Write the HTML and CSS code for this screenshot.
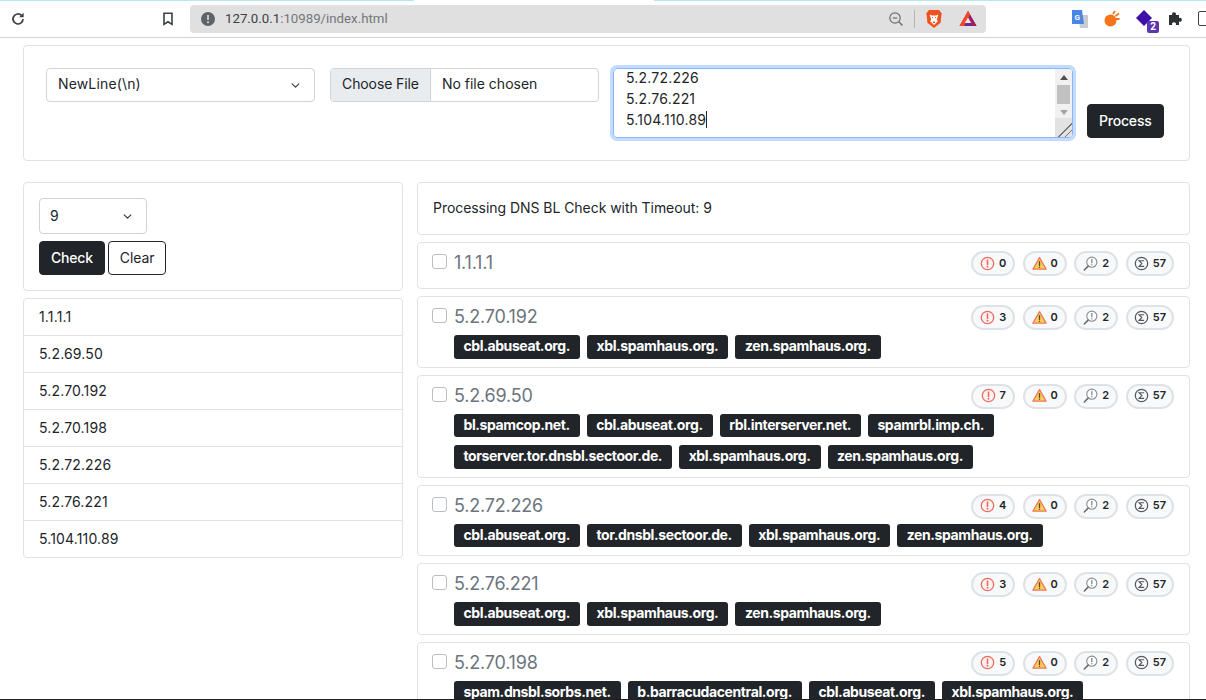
FILE: index.html
```html
<!DOCTYPE html>
<html lang="en">
<head>
  <meta charset="UTF-8">
  <title>DNS BL Check</title>
  <link rel="stylesheet" href="styles.css">
</head>
<body>
  <svg class="defs" width="0" height="0">
    <symbol id="i-error" viewBox="0 0 16 16">
      <circle cx="8" cy="8" r="6.6" fill="#fdf3f2" stroke="#ee6a60" stroke-width="1.4"/>
      <path d="M8 4.2v4.8" stroke="#ee6a60" stroke-width="1.7" stroke-linecap="round"/>
      <circle cx="8" cy="11.4" r="1" fill="#ee6a60"/>
    </symbol>
    <symbol id="i-warn" viewBox="0 0 16 16">
      <path d="M8 1.8 15 14H1z" fill="#f8cf5a" stroke="#ee7a5c" stroke-width="1.4" stroke-linejoin="round"/>
      <path d="M8 6v4" stroke="#5a4a20" stroke-width="1.4" stroke-linecap="round"/>
      <circle cx="8" cy="12" r=".8" fill="#5a4a20"/>
    </symbol>
    <symbol id="i-search" viewBox="0 0 16 16">
      <circle cx="9.4" cy="6.6" r="5.4" fill="#fff" stroke="#8a8f94" stroke-width="1.2"/>
      <path d="M5.4 10.8 1.4 15" stroke="#666b70" stroke-width="1.6" stroke-linecap="round"/>
      <path d="M9.4 3.6v3.6" stroke="#8a8f94" stroke-width="1.5" stroke-linecap="round"/>
      <circle cx="9.4" cy="9.2" r=".8" fill="#8a8f94"/>
    </symbol>
    <symbol id="i-sum" viewBox="0 0 16 16">
      <circle cx="8" cy="8" r="6.6" fill="none" stroke="#555a5f" stroke-width="1.3"/>
      <path d="M10.8 5H5.4l3 3-3 3h5.4" fill="none" stroke="#555a5f" stroke-width="1.2"/>
    </symbol>
  </svg>

  <div class="toolbar">
    <div class="loading-line"></div>
    <svg class="tool-reload" width="16" height="16" viewBox="0 0 16 16"><path d="M13 8a5 5 0 1 1-1.5-3.6" fill="none" stroke="#3c4043" stroke-width="1.7"/><path d="M13.6 1.8v4.4H9.2z" fill="#3c4043"/></svg>
    <svg class="tool-bookmark" width="12" height="14" viewBox="0 0 12 14"><path d="M2 1.2h8v11.2L6 9.8l-4 2.6z" fill="none" stroke="#3c4043" stroke-width="1.6"/></svg>
    <div class="address">
      <svg class="address-info" width="14" height="14" viewBox="0 0 14 14"><circle cx="7" cy="7" r="7" fill="#5f6368"/><path d="M7 3v5" stroke="#e0e0e0" stroke-width="1.6"/><circle cx="7" cy="10.3" r="1" fill="#e0e0e0"/></svg>
      <span class="address-host">127.0.0.1</span><span class="address-path">:10989/index.html</span>
      <div class="address-tools">
        <svg width="16" height="16" viewBox="0 0 16 16"><circle cx="7" cy="7" r="5.2" fill="none" stroke="#6a6e72" stroke-width="1.2"/><path d="M10.8 10.8 14.5 14.5" stroke="#6a6e72" stroke-width="1.4"/><path d="M4.8 7h4.4" stroke="#6a6e72" stroke-width="1.2"/></svg>
        <i class="address-sep"></i>
        <svg width="18" height="20" viewBox="0 0 18 20"><path d="M4 1h10l2.6 3.2-1 9.6L9 19l-6.6-5.2-1-9.6z" fill="#f1501f"/><path d="M4.6 5.6 7 6.4h4l2.4-.8-1.6 5 1 1.6L9 16l-3.8-3.8 1-1.6z" fill="#fff"/><path d="M7 8.6h1M10 8.6h1M8 13h2l-1 1z" stroke="#f1501f" stroke-width="1"/></svg>
        <svg class="address-bat" width="18" height="17" viewBox="0 0 18 17"><path d="M9 1 17.5 16H.5z" fill="#662d91"/><path d="M9 1 17.5 16H13L9 8.5z" fill="#9e1f63"/><path d="M.5 16 9 1l2 3.5L5 16z" fill="#ff4724"/><path d="M9 7.5 12.2 13H5.8z" fill="#e8e8e8"/></svg>
      </div>
    </div>
    <div class="extensions">
      <svg width="18" height="18" viewBox="0 0 18 18"><path d="M7 5h10v13H9z" fill="#c9cbce"/><path d="M1 0h10l2 14H1z" fill="#4a86e8"/><text x="3.4" y="10" class="ext-letter">G</text></svg>
      <svg width="16" height="17" viewBox="0 0 16 17"><ellipse cx="6.5" cy="10.5" rx="6" ry="6" fill="#f5761a"/><path d="M9 4 11 1M11.5 6 15 3.5M12 9h3.5" stroke="#f5761a" stroke-width="1.8"/></svg>
      <span class="ext-badged">
        <svg width="18" height="18" viewBox="0 0 18 18"><path d="M9 0 17 8l-8 8-8-8z" fill="#3f10a8"/></svg>
        <span class="ext-badge">2</span>
      </span>
      <svg width="15" height="15" viewBox="0 0 15 15"><path d="M1 4h3.2a2 2 0 1 1 3.6 0H11v3a2 2 0 1 1 0 3.6V14H7.8a2 2 0 1 0-3.6 0H1z" fill="#2f3133"/></svg>
      <span class="ext-cut"></span>
    </div>
  </div>

  <div class="page">
    <div class="card upload">
      <select class="select upload-select"><option>NewLine(\n)</option></select>
      <div class="file-input">
        <span class="file-button">Choose File</span>
        <span class="file-name">No file chosen</span>
      </div>
      <div class="textarea">
        <div class="textarea-text">
          <div>5.2.72.226</div>
          <div>5.2.76.221</div>
          <div><span class="caret">5.104.110.89</span></div>
        </div>
        <div class="scrollbar">
          <span class="scroll-up"></span>
          <span class="scroll-thumb"></span>
          <span class="scroll-down"></span>
          <span class="scroll-corner"></span>
        </div>
      </div>
      <button class="btn btn-dark process">Process</button>
    </div>

    <div class="columns">
      <div class="side">
        <div class="card timeout">
          <select class="select timeout-select"><option>9</option></select>
          <div class="timeout-buttons">
            <button class="btn btn-dark">Check</button>
            <button class="btn btn-outline">Clear</button>
          </div>
        </div>
        <ul class="ip-list">
          <li>1.1.1.1</li>
          <li>5.2.69.50</li>
          <li>5.2.70.192</li>
          <li>5.2.70.198</li>
          <li>5.2.72.226</li>
          <li>5.2.76.221</li>
          <li>5.104.110.89</li>
        </ul>
      </div>

      <div class="results">
        <div class="card status">Processing DNS BL Check with Timeout: 9</div>

        <div class="card result">
          <div class="result-head">
            <label class="result-title"><input type="checkbox" class="check">1.1.1.1</label>
            <div class="pills">
              <span class="pill"><svg><use href="#i-error"/></svg>0</span>
              <span class="pill"><svg><use href="#i-warn"/></svg>0</span>
              <span class="pill"><svg><use href="#i-search"/></svg>2</span>
              <span class="pill"><svg><use href="#i-sum"/></svg>57</span>
            </div>
          </div>
        </div>

        <div class="card result">
          <div class="result-head">
            <label class="result-title"><input type="checkbox" class="check">5.2.70.192</label>
            <div class="pills">
              <span class="pill"><svg><use href="#i-error"/></svg>3</span>
              <span class="pill"><svg><use href="#i-warn"/></svg>0</span>
              <span class="pill"><svg><use href="#i-search"/></svg>2</span>
              <span class="pill"><svg><use href="#i-sum"/></svg>57</span>
            </div>
          </div>
          <div class="tags">
            <span class="tag">cbl.abuseat.org.</span>
            <span class="tag">xbl.spamhaus.org.</span>
            <span class="tag">zen.spamhaus.org.</span>
          </div>
        </div>

        <div class="card result">
          <div class="result-head">
            <label class="result-title"><input type="checkbox" class="check">5.2.69.50</label>
            <div class="pills">
              <span class="pill"><svg><use href="#i-error"/></svg>7</span>
              <span class="pill"><svg><use href="#i-warn"/></svg>0</span>
              <span class="pill"><svg><use href="#i-search"/></svg>2</span>
              <span class="pill"><svg><use href="#i-sum"/></svg>57</span>
            </div>
          </div>
          <div class="tags">
            <span class="tag">bl.spamcop.net.</span>
            <span class="tag">cbl.abuseat.org.</span>
            <span class="tag">rbl.interserver.net.</span>
            <span class="tag">spamrbl.imp.ch.</span>
            <span class="tag">torserver.tor.dnsbl.sectoor.de.</span>
            <span class="tag">xbl.spamhaus.org.</span>
            <span class="tag">zen.spamhaus.org.</span>
          </div>
        </div>

        <div class="card result">
          <div class="result-head">
            <label class="result-title"><input type="checkbox" class="check">5.2.72.226</label>
            <div class="pills">
              <span class="pill"><svg><use href="#i-error"/></svg>4</span>
              <span class="pill"><svg><use href="#i-warn"/></svg>0</span>
              <span class="pill"><svg><use href="#i-search"/></svg>2</span>
              <span class="pill"><svg><use href="#i-sum"/></svg>57</span>
            </div>
          </div>
          <div class="tags">
            <span class="tag">cbl.abuseat.org.</span>
            <span class="tag">tor.dnsbl.sectoor.de.</span>
            <span class="tag">xbl.spamhaus.org.</span>
            <span class="tag">zen.spamhaus.org.</span>
          </div>
        </div>

        <div class="card result">
          <div class="result-head">
            <label class="result-title"><input type="checkbox" class="check">5.2.76.221</label>
            <div class="pills">
              <span class="pill"><svg><use href="#i-error"/></svg>3</span>
              <span class="pill"><svg><use href="#i-warn"/></svg>0</span>
              <span class="pill"><svg><use href="#i-search"/></svg>2</span>
              <span class="pill"><svg><use href="#i-sum"/></svg>57</span>
            </div>
          </div>
          <div class="tags">
            <span class="tag">cbl.abuseat.org.</span>
            <span class="tag">xbl.spamhaus.org.</span>
            <span class="tag">zen.spamhaus.org.</span>
          </div>
        </div>

        <div class="card result">
          <div class="result-head">
            <label class="result-title"><input type="checkbox" class="check">5.2.70.198</label>
            <div class="pills">
              <span class="pill"><svg><use href="#i-error"/></svg>5</span>
              <span class="pill"><svg><use href="#i-warn"/></svg>0</span>
              <span class="pill"><svg><use href="#i-search"/></svg>2</span>
              <span class="pill"><svg><use href="#i-sum"/></svg>57</span>
            </div>
          </div>
          <div class="tags">
            <span class="tag">spam.dnsbl.sorbs.net.</span>
            <span class="tag">b.barracudacentral.org.</span>
            <span class="tag">cbl.abuseat.org.</span>
            <span class="tag">xbl.spamhaus.org.</span>
          </div>
        </div>
      </div>
    </div>
  </div>
  <div class="bottom-line"></div>
</body>
</html>
```
FILE: styles.css
```css
/* Page frame */
html, body {
  height: 100%;
}
body {
  margin: 0;
  height: 700px;
  overflow: hidden;
  display: flex;
  flex-direction: column;
  background: #fff;
  color: #212529;
  font-family: 'Inter', sans-serif;
  font-size: 14px;
  line-height: 21px;
}
.defs {
  position: absolute;
}
/* Browser toolbar */
.toolbar {
  position: relative;
  flex: none;
  height: 37px;
  display: flex;
  align-items: center;
  background: #fff;
  border-bottom: 1px solid #d2d3d4;
}
.loading-line {
  position: absolute;
  top: 0;
  left: 0;
  right: 0;
  height: 1px;
  background: linear-gradient(to right, #b3e9f5 414px, #fff 414px, #fff 654px, #b3e9f5 654px);
}
.tool-reload {
  margin-left: 10px;
  flex: none;
}
.tool-bookmark {
  margin-left: 136px;
  flex: none;
}
.address {
  flex: none;
  width: 796px;
  height: 28px;
  margin-left: 16px;
  padding-left: 11px;
  box-sizing: border-box;
  display: flex;
  align-items: center;
  background: #e0e0e0;
  border-radius: 4px;
  font-family: 'Roboto', sans-serif;
  font-size: 13.25px;
}
.address-info {
  margin-right: 10px;
}
.address-host {
  color: #3c4043;
}
.address-path {
  color: #73777b;
}
.address-tools {
  margin-left: auto;
  display: flex;
  align-items: center;
  padding-right: 9px;
  gap: 10px;
}
.address-sep {
  width: 1px;
  height: 18px;
  background: #b4b4b4;
}
.address-bat {
  margin-left: 6px;
}
.extensions {
  display: flex;
  align-items: center;
  gap: 15px;
  margin-left: 85px;
}
.extensions svg {
  flex: none;
}
.ext-letter {
  font-family: 'Roboto', sans-serif;
  font-size: 8px;
  font-weight: 700;
  fill: #fff;
}
.ext-badged {
  position: relative;
  display: flex;
}
.ext-badge {
  position: absolute;
  right: -6px;
  bottom: -5px;
  width: 12px;
  height: 12px;
  background: #5e35b1;
  color: #fff;
  font-family: 'Roboto', sans-serif;
  font-size: 10px;
  font-weight: 700;
  line-height: 12px;
  text-align: center;
  border-radius: 2px;
}
.ext-cut {
  flex: none;
  width: 12px;
  height: 13px;
  border: 1.5px solid #3c4043;
  border-radius: 2px;
}
/* Content */
.page {
  flex: 1;
  min-height: 0;
  overflow: hidden;
  padding: 7px 16px 0 23px;
}
.card {
  background: #fff;
  border: 1px solid #dfe2e6;
  border-radius: 4px;
  box-sizing: border-box;
}
.upload {
  height: 116px;
  padding: 22px 25px 0 22px;
  display: flex;
  align-items: flex-start;
}
.select {
  appearance: none;
  flex: none;
  height: 34px;
  padding: 0 11px 3px;
  background: #fff url("data:image/svg+xml,%3csvg xmlns='http://www.w3.org/2000/svg' viewBox='0 0 16 16'%3e%3cpath fill='none' stroke='%23343a40' stroke-linecap='round' stroke-linejoin='round' stroke-width='2' d='M2 5l6 6 6-6'/%3e%3c/svg%3e") no-repeat right 13px center / 11px 9px;
  border: 1px solid #ced4da;
  border-radius: 4px;
  color: #212529;
  font: inherit;
}
.upload-select {
  width: 269px;
  letter-spacing: 0.15px;
}
.file-input {
  flex: none;
  width: 269px;
  height: 34px;
  margin-left: 15px;
  display: flex;
  box-sizing: border-box;
  border: 1px solid #ced4da;
  border-radius: 4px;
  line-height: 29px;
  overflow: hidden;
}
.file-button {
  padding: 0 11px;
  background: #e9ecef;
  border-right: 1px solid #ced4da;
  letter-spacing: -0.1px;
}
.file-name {
  padding-left: 11px;
}
.textarea {
  flex: none;
  width: 460px;
  height: 70px;
  margin-left: 14px;
  box-sizing: border-box;
  display: flex;
  border: 1px solid #86b7fe;
  border-radius: 4px;
  box-shadow: 0 0 0 3px #c2dbfe;
  overflow: hidden;
}
.textarea-text {
  flex: 1;
  display: flex;
  flex-direction: column;
  justify-content: flex-end;
  padding: 0 12px 7px;
  overflow: hidden;
  letter-spacing: 0.2px;
}
.caret {
  border-right: 1px solid #212529;
}
.scrollbar {
  position: relative;
  flex: none;
  width: 17px;
  display: flex;
  flex-direction: column;
  align-items: center;
  background: #f1f1f1;
}
.scroll-up {
  margin-top: 6px;
  border: 4px solid transparent;
  border-top: 0;
  border-bottom: 5px solid #505050;
}
.scroll-thumb {
  width: 13px;
  height: 19px;
  margin-top: 5px;
  background: #c1c1c1;
}
.scroll-down {
  margin-top: 6px;
  border: 4px solid transparent;
  border-bottom: 0;
  border-top: 5px solid #a3a3a3;
}
.scroll-corner {
  position: absolute;
  right: 0;
  bottom: 0;
  width: 17px;
  height: 19px;
  background: linear-gradient(135deg, #e2e2e2 60%, #777 60%, #777 64%, #e2e2e2 64%, #e2e2e2 78%, #777 78%, #777 82%, #e2e2e2 82%);
}
.btn {
  flex: none;
  height: 34px;
  padding: 0 11px 2px;
  border: 1px solid #212529;
  border-radius: 4px;
  font: inherit;
}
.btn-dark {
  background: #212529;
  color: #fff;
  font-weight: 500;
  letter-spacing: -0.2px;
}
.btn-outline {
  background: #fff;
  color: #212529;
  letter-spacing: -0.1px;
}
.process {
  margin: 36px 0 0 14px;
}
.columns {
  display: grid;
  grid-template-columns: 380px 773px;
  column-gap: 14px;
  margin-top: 21px;
}
.side {
  display: flex;
  flex-direction: column;
  gap: 7px;
}
.timeout {
  height: 109px;
  padding: 15px;
}
.timeout-select {
  width: 108px;
  height: 36px;
  padding: 0 10px 2px;
  display: block;
}
.timeout-buttons {
  display: flex;
  gap: 3px;
  margin-top: 7px;
}
.ip-list {
  list-style: none;
  margin: 0;
  padding: 0;
  border: 1px solid #dfe2e6;
  border-radius: 4px;
  letter-spacing: 0.15px;
}
.ip-list li {
  height: 37px;
  box-sizing: border-box;
  padding: 7px 15px 0;
  border-bottom: 1px solid #dfe2e6;
}
.ip-list li:last-child {
  height: 36px;
  border-bottom: 0;
}
.results {
  display: flex;
  flex-direction: column;
  gap: 7px;
}
.status {
  height: 53px;
  padding: 14px 15px;
  letter-spacing: -0.05px;
}
.result {
  padding: 8px 15px 8px 14px;
}
.result-head {
  display: flex;
  justify-content: space-between;
  align-items: flex-start;
  min-height: 29px;
}
.result-title {
  display: flex;
  align-items: flex-start;
  color: #6c757d;
  font-size: 18px;
  line-height: 23px;
  letter-spacing: -0.2px;
}
.check {
  appearance: none;
  flex: none;
  width: 15px;
  height: 15px;
  margin: 3px 7px 0 0;
  background: #fff;
  border: 1px solid #b9bec3;
  border-radius: 3px;
}
.pills {
  display: flex;
  gap: 7.5px;
}
.pill {
  height: 25px;
  min-width: 44px;
  box-sizing: border-box;
  padding: 0 6px 1px;
  display: flex;
  align-items: center;
  justify-content: center;
  gap: 4px;
  background: #f8f9fa;
  border: 2px solid #dee2e6;
  border-radius: 13px;
  font-size: 11px;
  font-weight: 600;
  line-height: 1;
}
.pill svg {
  flex: none;
  width: 15px;
  height: 15px;
}
.tags {
  display: flex;
  flex-wrap: wrap;
  gap: 8px 7px;
  padding-left: 22px;
  margin-top: 1px;
}
.tag {
  height: 23.5px;
  padding: 0 10px 0 9.5px;
  background: #212529;
  color: #fff;
  border-radius: 3px;
  font-weight: 700;
  line-height: 22px;
  letter-spacing: -0.4px;
}
.bottom-line {
  position: absolute;
  left: 0;
  right: 0;
  top: 699px;
  height: 1px;
  background: #202020;
}
```
